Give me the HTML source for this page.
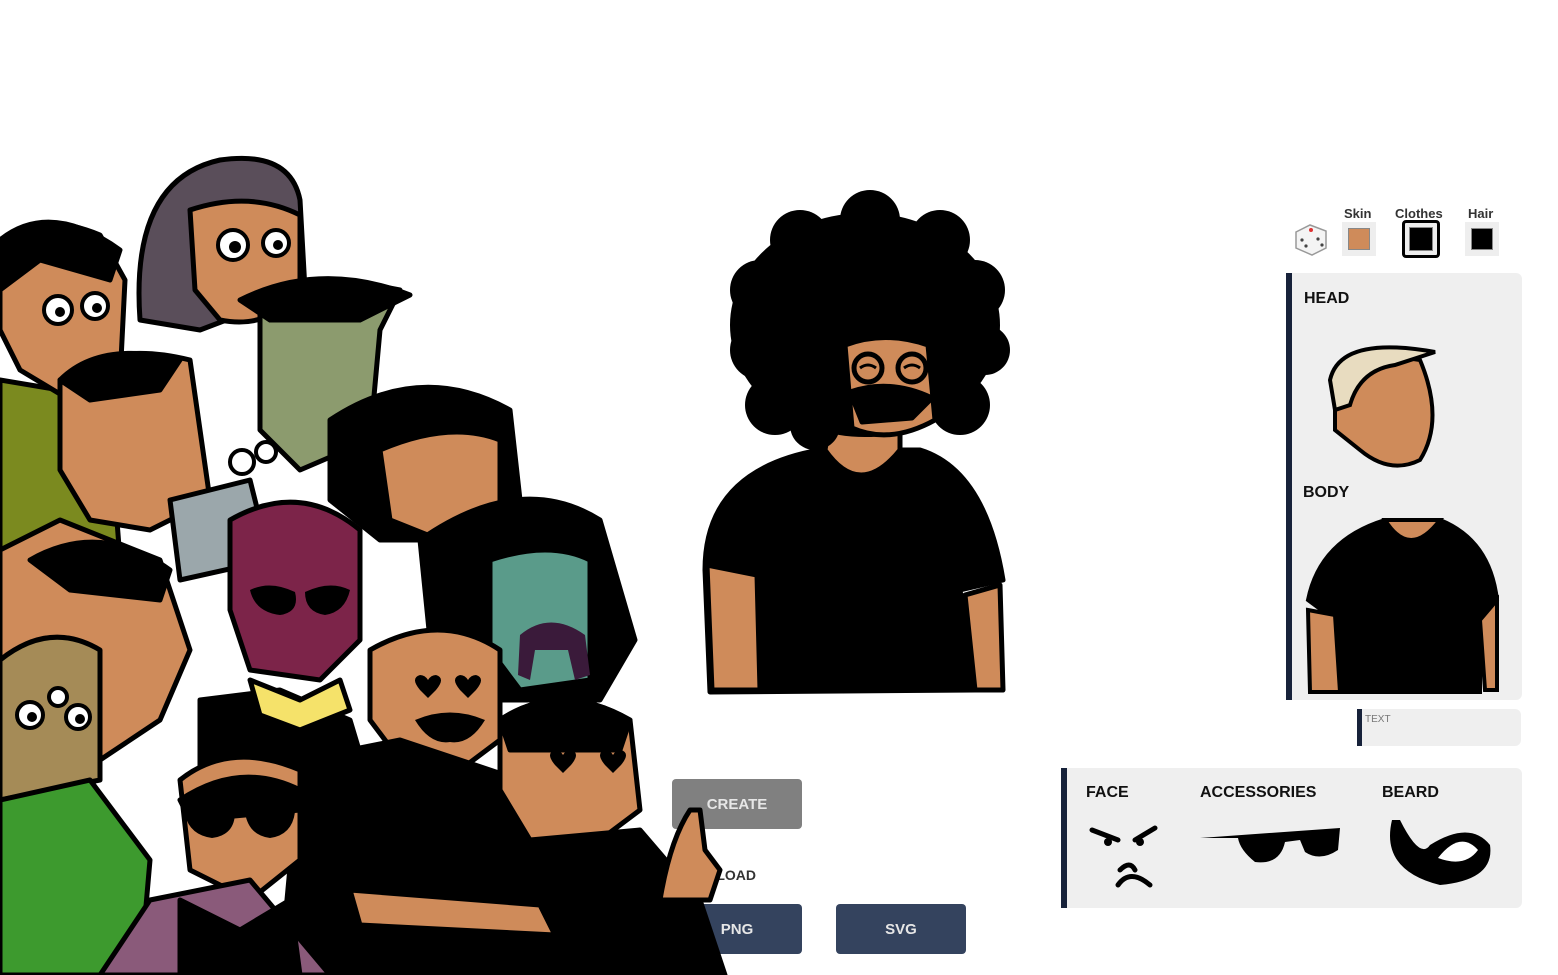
<!DOCTYPE html>
<html><head><meta charset="utf-8"><style>
body{margin:0;width:1558px;height:975px;background:#fff;position:relative;overflow:hidden;font-family:"Liberation Sans",sans-serif}
.btn{position:absolute;border-radius:4px;color:#e6e6e6;font-weight:bold;font-size:15px;display:flex;align-items:center;justify-content:center}
.panel{position:absolute;background:#efefef;border-left:6px solid #17223a;border-radius:0 6px 6px 0}
.lbl{position:absolute;font-size:16px;font-weight:bold;color:#111}
.sw{position:absolute;font-size:13px;font-weight:bold;color:#333}
</style></head><body>

<svg width="1558" height="975" style="position:absolute;left:0;top:0">
<!-- crowd -->
<g stroke="#000" stroke-width="5" stroke-linejoin="round">
<path d="M0 380 L60 390 L110 430 L120 560 L0 560Z" fill="#7b8a1f"/>
<path d="M0 240 Q40 210 100 235 L125 280 L120 380 L70 400 L20 370 L0 330Z" fill="#cf8b5a"/>
<path d="M0 240 Q50 200 120 250 L110 280 L40 260 L0 290Z" fill="#000"/>
<path d="M140 320 Q130 180 220 160 Q290 150 300 200 L305 290 L200 330Z" fill="#5a4e5a"/>
<path d="M190 210 Q250 190 300 215 L300 290 Q270 330 220 320 L195 290Z" fill="#cf8b5a"/>
<path d="M260 300 Q300 270 400 290 L380 330 L370 440 L300 470 L260 430Z" fill="#8c9b6e"/>
<path d="M240 300 Q320 260 410 295 L360 320 L270 320Z" fill="#000"/>
<path d="M60 380 Q110 340 190 360 L210 500 L150 530 L90 520 L60 470Z" fill="#cf8b5a"/>
<path d="M60 380 Q100 340 180 360 L160 390 L90 400Z" fill="#000"/>
<path d="M170 500 L250 480 L270 560 L180 580Z" fill="#9ba7ab"/>
<path d="M330 420 Q420 360 510 410 L520 500 L460 540 L380 540 L330 500Z" fill="#000"/>
<path d="M380 450 Q450 420 500 440 L500 520 L440 540 L390 520Z" fill="#cf8b5a"/>
<path d="M0 550 L60 520 L160 560 L190 650 L160 720 L100 760 L0 760Z" fill="#cf8b5a"/>
<path d="M30 560 Q100 520 170 570 L160 600 L70 590Z" fill="#000"/>
<path d="M230 520 Q300 480 360 530 L360 640 L320 680 L250 670 L230 610Z" fill="#7c2449"/>
<path d="M420 540 Q520 470 600 520 L635 640 L600 700 L480 700 L430 640Z" fill="#000"/>
<path d="M490 560 Q550 540 590 560 L590 680 L520 690 L490 650Z" fill="#5a9b8a"/>
<path d="M0 660 Q50 620 100 650 L100 780 L0 800Z" fill="#a58b57"/>
<path d="M0 800 L90 780 L150 860 L140 975 L0 975Z" fill="#3d9a2e"/>
<path d="M370 650 Q440 610 500 650 L500 740 L460 770 L400 760 L370 720Z" fill="#cf8b5a"/>
<path d="M200 700 L280 690 L350 720 L380 820 L300 860 L200 820Z" fill="#000"/>
<path d="M250 680 L300 700 L340 680 L350 710 L300 730 L260 715Z" fill="#f5e26a"/>
<path d="M300 760 L400 740 L520 780 L560 900 L520 975 L280 975Z" fill="#000"/>
<path d="M180 780 Q230 740 300 770 L300 860 L250 900 L190 870Z" fill="#cf8b5a"/>
<path d="M180 800 Q240 760 300 790 L300 810 L190 820Z" fill="#000"/>
<path d="M100 975 L150 900 L250 880 L330 975Z" fill="#8a5a7a"/>
<path d="M180 900 L240 930 L290 900 L300 975 L180 975Z" fill="#000"/>
<path d="M500 720 Q560 680 630 720 L640 810 L600 840 L530 840 L500 790Z" fill="#cf8b5a"/>
<path d="M500 720 Q560 680 630 720 L620 750 L510 750Z" fill="#000"/>
<path d="M530 840 L640 830 L700 900 L725 975 L520 975Z" fill="#000"/>
<path d="M350 890 L540 905 L555 935 L360 925Z" fill="#cf8b5a"/>
<path d="M660 900 Q670 840 690 810 L700 810 L705 850 L720 870 L710 900Z" fill="#cf8b5a"/>
</g>
<!-- crowd eyes -->
<g fill="#fff" stroke="#000" stroke-width="4">
<circle cx="58" cy="310" r="14"/><circle cx="95" cy="306" r="13"/>
<circle cx="233" cy="245" r="15"/><circle cx="276" cy="243" r="13"/>
<circle cx="242" cy="462" r="12"/><circle cx="266" cy="452" r="10"/>
<circle cx="30" cy="715" r="13"/><circle cx="78" cy="717" r="12"/><circle cx="58" cy="697" r="9"/>
</g>
<g fill="#000"><circle cx="60" cy="312" r="5"/><circle cx="97" cy="308" r="5"/><circle cx="235" cy="247" r="6"/><circle cx="278" cy="245" r="5"/><circle cx="32" cy="717" r="5"/><circle cx="80" cy="719" r="5"/>
<path d="M250 590 Q270 580 295 592 Q300 612 280 615 Q255 612 250 590Z M305 592 Q330 580 350 590 Q345 612 325 615 Q305 612 305 592Z"/>
<path d="M185 815 Q210 800 235 812 Q235 835 212 838 Q190 835 185 815Z M245 812 Q270 800 295 812 Q292 835 270 838 Q248 835 245 812Z"/>
<path d="M420 690 q-10 -12 0 -15 q5 0 8 5 q3 -5 8 -5 q10 3 0 15 l-8 8Z M460 690 q-10 -12 0 -15 q5 0 8 5 q3 -5 8 -5 q10 3 0 15 l-8 8Z"/>
<path d="M555 765 q-10 -12 0 -15 q5 0 8 5 q3 -5 8 -5 q10 3 0 15 l-8 8Z M605 765 q-10 -12 0 -15 q5 0 8 5 q3 -5 8 -5 q10 3 0 15 l-8 8Z"/>
<path d="M520 635 Q550 610 585 635 L590 675 L575 680 L568 650 L535 650 L530 680 L518 675Z" fill="#3a1a3a"/>
<path d="M415 720 Q450 705 485 720 Q470 745 450 742 Q430 745 415 720Z"/>
</g>
<!-- main avatar -->
<g stroke="#000" stroke-width="5" stroke-linejoin="round">
<path d="M705 570 Q705 470 820 450 L920 450 Q985 470 1003 580 L960 590 L975 690 L710 692Z" fill="#000"/>
<path d="M707 565 L757 575 L760 690 L712 690Z" fill="#cf8b5a"/>
<path d="M965 595 L1000 585 L1003 690 L975 690Z" fill="#cf8b5a"/>
<path d="M825 450 Q860 500 900 450 L900 420 L830 420Z" fill="#cf8b5a"/>
</g>
<g fill="#000">
<ellipse cx="865" cy="325" rx="135" ry="112"/>
<circle cx="760" cy="290" r="30"/><circle cx="800" cy="240" r="30"/><circle cx="870" cy="220" r="30"/><circle cx="940" cy="240" r="30"/><circle cx="975" cy="290" r="30"/><circle cx="985" cy="350" r="25"/><circle cx="960" cy="405" r="30"/><circle cx="760" cy="350" r="30"/><circle cx="775" cy="405" r="30"/><circle cx="815" cy="425" r="25"/>
</g>
<g stroke="#000" stroke-width="5" stroke-linejoin="round">
<path d="M845 345 Q885 330 928 345 L935 420 Q890 445 852 428Z" fill="#cf8b5a"/>
<path d="M850 392 Q890 378 932 398 L912 418 L862 422Z" fill="#000"/>
<circle cx="868" cy="368" r="14" fill="none"/><circle cx="912" cy="368" r="14" fill="none"/>
<path d="M860 368 q8 -6 16 0 M904 368 q8 -6 16 0" fill="none" stroke-width="3"/>
</g>
<!-- head/body preview -->
<g stroke="#000" stroke-width="4">
<path d="M1335 380 Q1360 350 1420 360 Q1445 420 1420 460 Q1390 475 1360 450 L1335 430Z" fill="#cf8b5a"/>
<path d="M1330 380 Q1340 335 1435 352 L1395 365 Q1360 370 1350 405 L1335 410Z" fill="#e8dcc0"/>
<path d="M1308 600 Q1320 540 1385 520 L1440 520 Q1490 540 1497 600 L1480 620 L1480 692 L1340 692 L1335 620Z" fill="#000"/>
<path d="M1308 610 L1335 615 L1340 692 L1310 692Z" fill="#cf8b5a"/>
<path d="M1480 620 L1497 600 L1497 690 L1485 690Z" fill="#cf8b5a"/>
<path d="M1385 520 Q1410 560 1440 520Z" fill="#cf8b5a"/>
</g>
<!-- face/accessories/beard icons -->
<g stroke="#000" stroke-width="5" fill="none" stroke-linecap="round">
<path d="M1092 830 L1118 840 M1135 840 L1155 828 M1120 870 Q1130 860 1135 870 M1118 885 Q1130 868 1150 885"/>
</g>
<circle cx="1108" cy="842" r="4"/><circle cx="1140" cy="842" r="4"/>
<path d="M1200 838 L1340 828 L1338 850 Q1320 862 1305 852 L1300 840 L1285 842 Q1280 865 1255 862 Q1240 850 1238 838 Z" fill="#000"/>
<path d="M1392 820 Q1380 870 1440 885 Q1495 880 1490 845 Q1470 820 1430 845 Q1420 860 1400 820Z" fill="#000"/>
<path d="M1438 858 Q1460 830 1478 850 Q1465 868 1438 858Z" fill="#fff"/>
<!-- dice -->
<g transform="translate(1294,222)"><path d="M2 10 L16 3 L32 9 L32 26 L18 33 L2 26Z" fill="#f4f4f4" stroke="#999" stroke-width="1.5"/><circle cx="17" cy="8" r="2" fill="#d33"/><circle cx="8" cy="18" r="1.6" fill="#444"/><circle cx="12" cy="24" r="1.6" fill="#444"/><circle cx="24" cy="17" r="1.6" fill="#444"/><circle cx="28" cy="23" r="1.6" fill="#444"/></g>
</svg>

<div class="sw" style="left:1344px;top:206px">Skin</div>
<div class="sw" style="left:1395px;top:206px">Clothes</div>
<div class="sw" style="left:1468px;top:206px">Hair</div>
<div style="position:absolute;left:1342px;top:222px;width:34px;height:34px;background:#eee"><div style="margin:6px;width:20px;height:20px;background:#cf8b5a;border:1px solid #888"></div></div>
<div style="position:absolute;left:1402px;top:220px;width:32px;height:32px;border:3px solid #000;border-radius:4px;background:#eee"><div style="margin:4px;width:22px;height:22px;background:#000;border:1px solid #888"></div></div>
<div style="position:absolute;left:1465px;top:222px;width:34px;height:34px;background:#eee"><div style="margin:6px;width:20px;height:20px;background:#000;border:1px solid #888"></div></div>

<div class="panel" style="left:1286px;top:273px;width:230px;height:427px;z-index:-1"></div>
<div class="lbl" style="left:1304px;top:290px">HEAD</div>
<div class="lbl" style="left:1303px;top:484px">BODY</div>
<div class="panel" style="left:1357px;top:709px;width:159px;height:37px;border-left-width:5px"><span style="font-size:10px;color:#777;position:absolute;left:3px;top:5px">TEXT</span></div>
<div class="panel" style="left:1061px;top:768px;width:455px;height:140px;z-index:-1"></div>
<div class="lbl" style="left:1086px;top:784px">FACE</div>
<div class="lbl" style="left:1200px;top:784px">ACCESSORIES</div>
<div class="lbl" style="left:1382px;top:784px">BEARD</div>

<div class="btn" style="left:672px;top:779px;width:130px;height:50px;background:#808080;z-index:-1">CREATE</div>
<div style="position:absolute;left:672px;top:867px;font-size:14px;font-weight:bold;color:#333;z-index:-1">DOWNLOAD</div>
<div class="btn" style="left:672px;top:904px;width:130px;height:50px;background:#34435e;z-index:-1">PNG</div>
<div class="btn" style="left:836px;top:904px;width:130px;height:50px;background:#34435e">SVG</div>
</body></html>
